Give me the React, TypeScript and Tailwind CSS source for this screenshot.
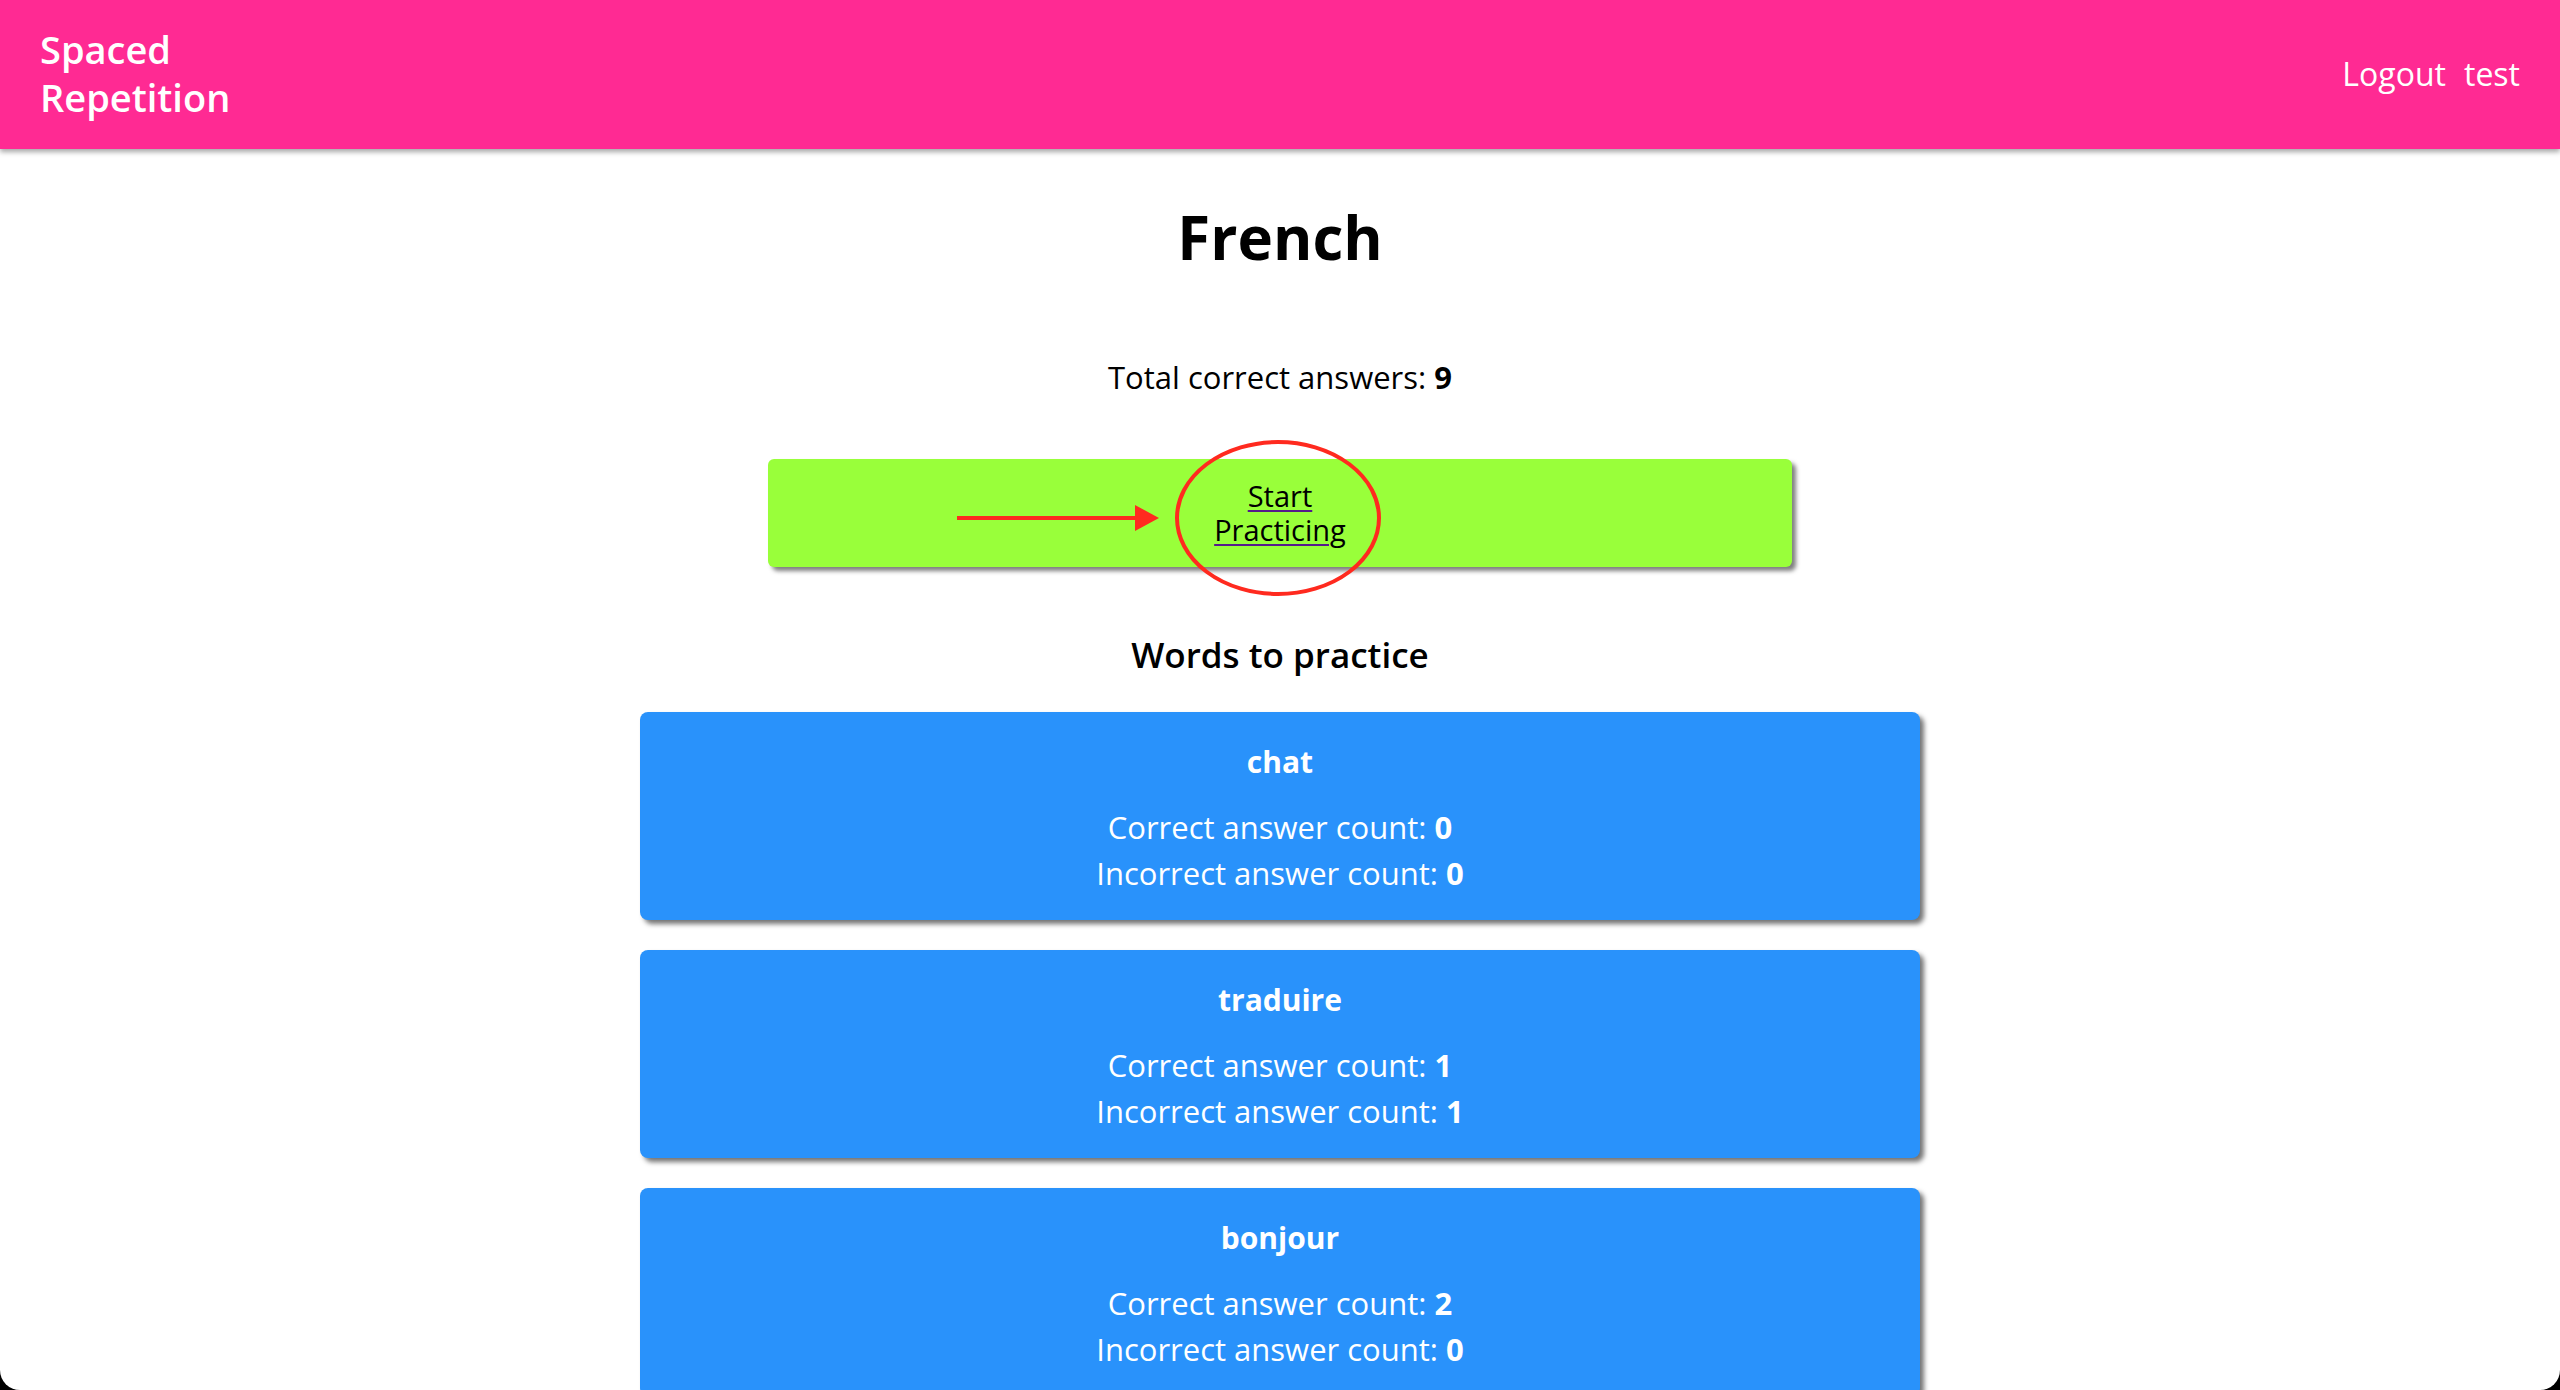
// Spaced repetition dashboard for a single language

interface Word {
  original: string;
  correct: number;
  incorrect: number;
}

const words: Word[] = [
  { original: 'chat', correct: 0, incorrect: 0 },
  { original: 'traduire', correct: 1, incorrect: 1 },
  { original: 'bonjour', correct: 2, incorrect: 0 },
];

function WordCard({ word }: { word: Word }) {
  return (
    <li className="flex h-[208px] w-[1280px] shrink-0 flex-col items-center rounded-[8px] bg-[#2992fb] pt-[30px] text-white shadow-[4px_4px_5px_rgba(0,0,0,0.55)]">
      <h4 className="text-[30px] font-bold leading-[40px]">{word.original}</h4>
      <p className="mt-[22px] text-[31px] leading-[46px]">
        Correct answer count: <span className="font-bold">{word.correct}</span>
      </p>
      <p className="text-[31px] leading-[46px]">
        Incorrect answer count: <span className="font-bold">{word.incorrect}</span>
      </p>
    </li>
  );
}

export default function App() {
  return (
    <div className="h-screen overflow-hidden bg-black">
      <div className="h-full overflow-hidden rounded-b-[20px] bg-white font-['Open_Sans',sans-serif] text-black">
        <header className="relative z-10 flex h-[149px] items-center justify-between bg-[#ff2a93] pl-10 pr-10 text-white shadow-[0_3px_5px_rgba(0,0,0,0.35)]">
          <h1 className="-mt-[4px] text-[38px] font-semibold leading-[48px]">
            Spaced
            <br />
            Repetition
          </h1>
          <nav className="-mt-[2px] flex gap-[18px] text-[32px]">
            <a>Logout</a>
            <span>test</span>
          </nav>
        </header>

        <main className="flex flex-col items-center">
          <h2 className="mt-[48px] text-[60px] font-bold leading-[80px]">French</h2>
          <p className="mt-[80px] text-[31px] leading-[40px]">
            Total correct answers: <span className="font-bold">9</span>
          </p>

          <div className="relative mt-[62px] flex h-[108px] w-[1024px] items-center justify-center rounded-[6px] bg-[#99ff3a] shadow-[4px_4px_4px_rgba(0,0,0,0.5)]">
            <a className="text-center text-[29px] leading-[34px] underline decoration-[#551a8b] decoration-2 underline-offset-[3px]">
              Start
              <br />
              Practicing
            </a>
            <svg className="absolute left-[189px] top-[45px]" width="204" height="28" viewBox="0 0 204 28">
              <line x1="0" y1="14" x2="180" y2="14" stroke="#ff2a1f" strokeWidth="4" />
              <polygon points="178,1 202,14 178,27" fill="#ff2a1f" />
            </svg>
            <svg className="absolute left-[406px] top-[-20px]" width="208" height="158" viewBox="0 0 208 158">
              <ellipse cx="104" cy="79" rx="101" ry="76" fill="none" stroke="#ff2a1f" strokeWidth="4" />
            </svg>
          </div>

          <h3 className="mt-[64px] text-[35px] font-semibold leading-[48px]">Words to practice</h3>

          <ul className="mt-[33px] flex flex-col gap-[30px]">
            {words.map((w) => (
              <WordCard key={w.original} word={w} />
            ))}
          </ul>
        </main>
      </div>
    </div>
  );
}
